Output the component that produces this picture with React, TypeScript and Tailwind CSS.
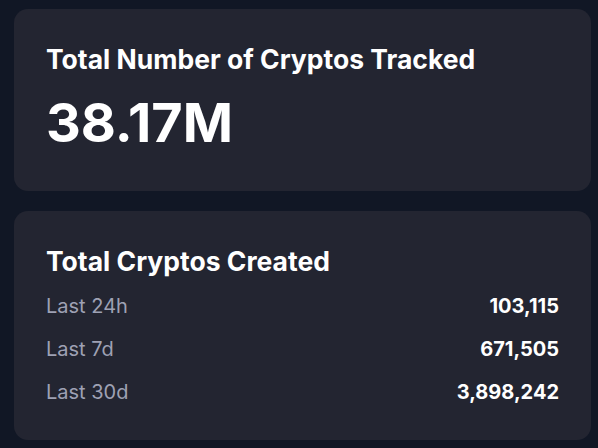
import React from "react";

const rows = [
  { label: "Last 24h", value: "103,115" },
  { label: "Last 7d", value: "671,505" },
  { label: "Last 30d", value: "3,898,242" },
];

export default function App() {
  return (
    <div
      className="w-[598px] h-[448px] bg-[#111725] pt-[9px] pl-[14px] pr-[7px] flex flex-col gap-5"
      style={{ fontFamily: "Inter, 'Noto Sans', sans-serif" }}
    >
      <div className="h-[182px] rounded-[14px] bg-[#232531] p-8 flex flex-col">
        <h2 className="text-[26.5px] leading-[36px] font-bold text-white">
          Total Number of Cryptos Tracked
        </h2>
        <div className="mt-[18px] text-[54px] leading-[56px] font-bold text-white">38.17M</div>
      </div>
      <div className="h-[229px] rounded-[14px] bg-[#232531] p-8 flex flex-col">
        <h2 className="text-[26.5px] leading-[36px] font-bold text-white">Total Cryptos Created</h2>
        <div className="mt-[13px] flex flex-col gap-[15px]">
          {rows.map((r) => (
            <div key={r.label} className="flex justify-between items-center text-[20px] leading-[28px]">
              <span className="text-[#9ea1b4]">{r.label}</span>
              <span className="text-white font-bold">{r.value}</span>
            </div>
          ))}
        </div>
      </div>
    </div>
  );
}
